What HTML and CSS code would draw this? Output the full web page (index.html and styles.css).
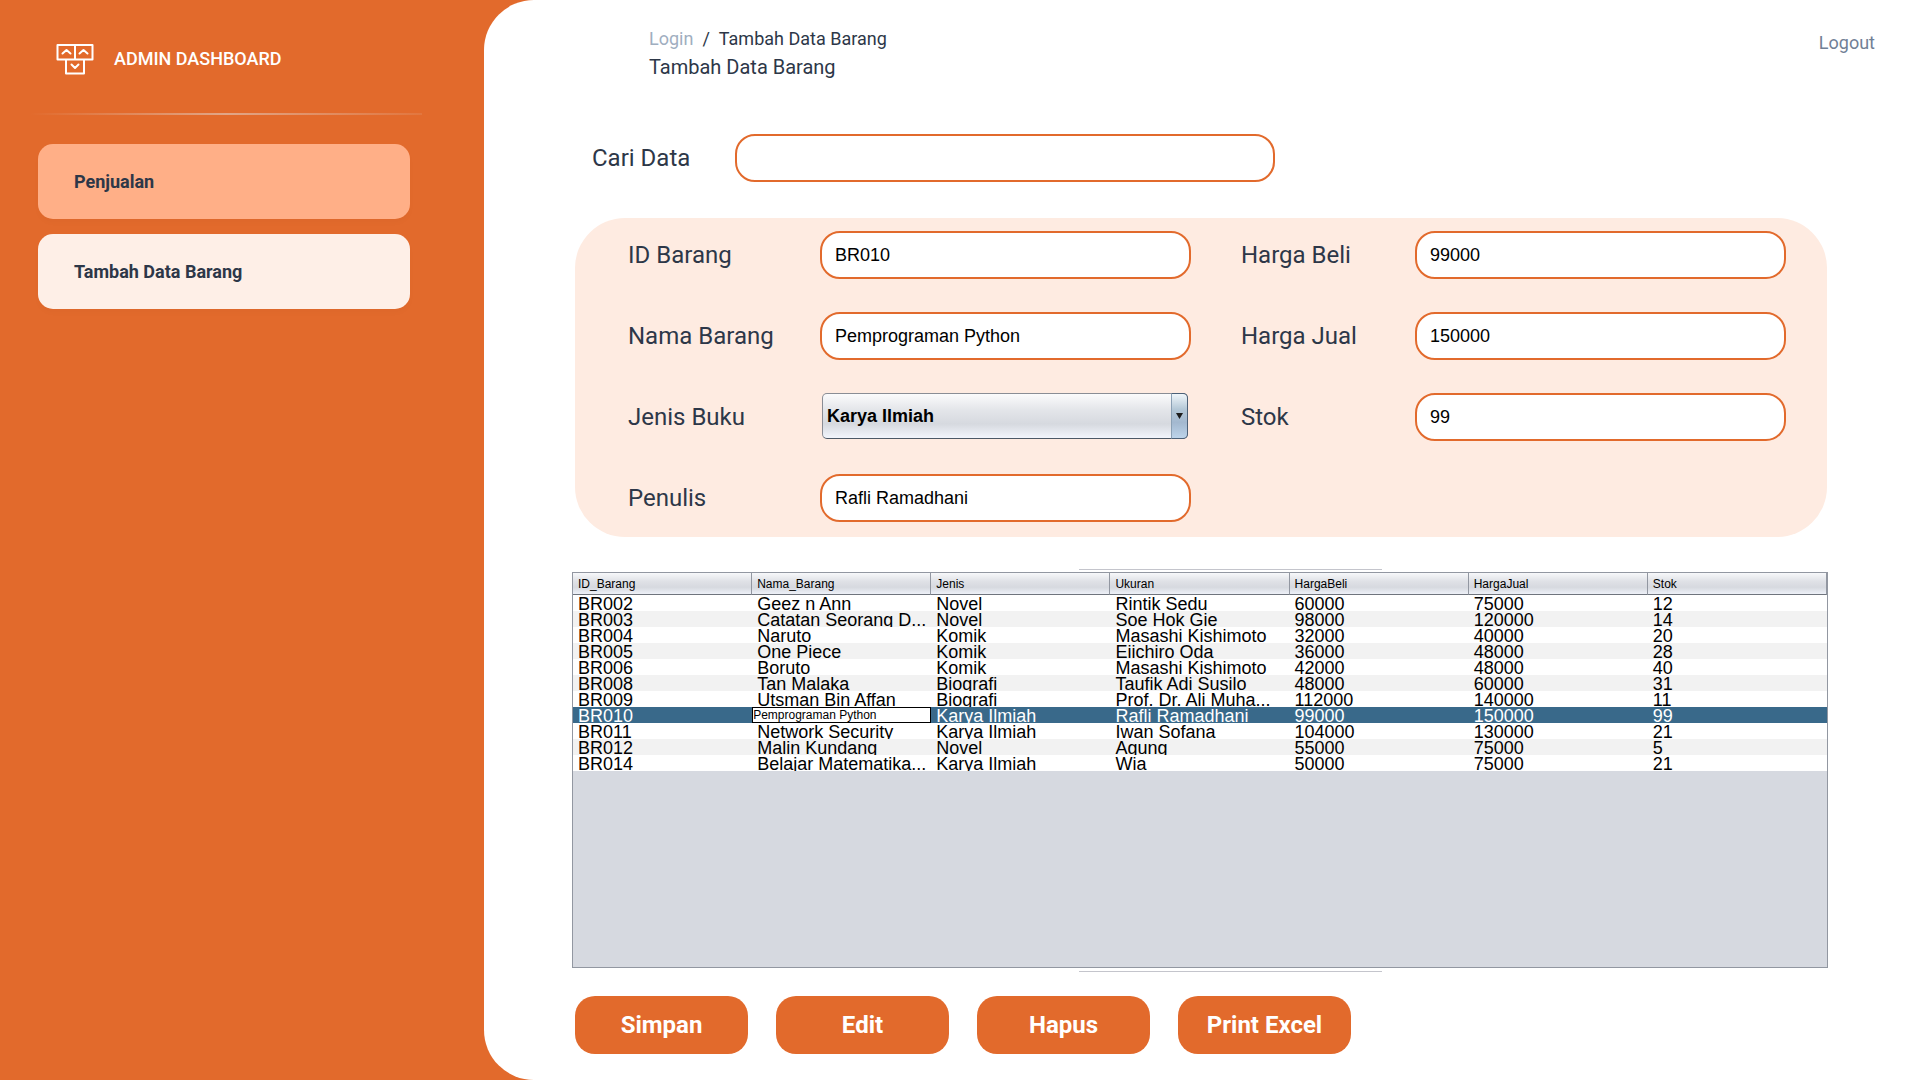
FILE: index.html
```html
<!DOCTYPE html>
<html lang="id">
<head>
<meta charset="utf-8">
<title>Tambah Data Barang</title>
<link rel="stylesheet" href="styles.css">
</head>
<body>
<div class="app">
  <aside class="sidebar">
    <div class="brand">
      <svg class="brand-icon" width="38" height="31" viewBox="0 0 38 31" fill="none" stroke="#fff" stroke-width="2" stroke-linejoin="round" stroke-linecap="round" aria-hidden="true">
        <path d="M1.500 1H36.500V15.500H1.500ZM19 1V15.500M10 15.500H28V29.500H10Z"/>
        <path d="M6.500 9.500L10.500 6L14.500 9.500M23.500 9.500L27.500 6L31.500 9.500M15.500 20.500L19 24L22.500 20.500"/>
      </svg>
      <span class="brand-name">ADMIN DASHBOARD</span>
    </div>
    <div class="divider"></div>
    <nav class="menu">
      <a class="menu-item" href="#penjualan">Penjualan</a>
      <a class="menu-item active" href="#barang">Tambah Data Barang</a>
    </nav>
  </aside>
  <main class="main">
    <header class="topbar">
      <div class="heading">
        <nav class="crumbs"><a href="#login">Login</a><span>/</span><span>Tambah Data Barang</span></nav>
        <h1 class="title">Tambah Data Barang</h1>
      </div>
      <a class="logout" href="#logout">Logout</a>
    </header>
    <div class="content">
      <div class="search">
        <label class="label" for="cari">Cari Data</label>
        <input class="field search-field" id="cari" type="text">
      </div>
      <form class="panel" id="barang-form">
        <label class="label" for="id">ID Barang</label>
        <input class="field" id="id" type="text" value="BR010">
        <label class="label right" for="beli">Harga Beli</label>
        <input class="field" id="beli" type="text" value="99000">
        <label class="label" for="nama">Nama Barang</label>
        <input class="field" id="nama" type="text" value="Pemprograman Python">
        <label class="label right" for="jual">Harga Jual</label>
        <input class="field" id="jual" type="text" value="150000">
        <label class="label" for="jenis">Jenis Buku</label>
        <div class="combo">
          <select id="jenis">
            <option>Karya Ilmiah</option>
            <option>Novel</option>
            <option>Komik</option>
            <option>Biografi</option>
          </select>
          <span class="combo-arrow"></span>
        </div>
        <label class="label right" for="stok">Stok</label>
        <input class="field" id="stok" type="text" value="99">
        <label class="label" for="penulis">Penulis</label>
        <input class="field" id="penulis" type="text" value="Rafli Ramadhani">
      </form>
      <div class="rule"></div>
      <div class="grid-box">
        <table class="grid">
          <thead>
            <tr><th>ID_Barang</th><th>Nama_Barang</th><th>Jenis</th><th>Ukuran</th><th>HargaBeli</th><th>HargaJual</th><th>Stok</th></tr>
          </thead>
          <tbody>
            <tr><td>BR002</td><td>Geez n Ann</td><td>Novel</td><td>Rintik Sedu</td><td>60000</td><td>75000</td><td>12</td></tr>
            <tr><td>BR003</td><td>Catatan Seorang D...</td><td>Novel</td><td>Soe Hok Gie</td><td>98000</td><td>120000</td><td>14</td></tr>
            <tr><td>BR004</td><td>Naruto</td><td>Komik</td><td>Masashi Kishimoto</td><td>32000</td><td>40000</td><td>20</td></tr>
            <tr><td>BR005</td><td>One Piece</td><td>Komik</td><td>Eiichiro Oda</td><td>36000</td><td>48000</td><td>28</td></tr>
            <tr><td>BR006</td><td>Boruto</td><td>Komik</td><td>Masashi Kishimoto</td><td>42000</td><td>48000</td><td>40</td></tr>
            <tr><td>BR008</td><td>Tan Malaka</td><td>Biografi</td><td>Taufik Adi Susilo</td><td>48000</td><td>60000</td><td>31</td></tr>
            <tr><td>BR009</td><td>Utsman Bin Affan</td><td>Biografi</td><td>Prof. Dr. Ali Muha...</td><td>112000</td><td>140000</td><td>11</td></tr>
            <tr class="selected"><td>BR010</td><td class="editing"><input type="text" aria-label="Nama_Barang" value="Pemprograman Python"></td><td>Karya Ilmiah</td><td>Rafli Ramadhani</td><td>99000</td><td>150000</td><td>99</td></tr>
            <tr><td>BR011</td><td>Network Security</td><td>Karya Ilmiah</td><td>Iwan Sofana</td><td>104000</td><td>130000</td><td>21</td></tr>
            <tr><td>BR012</td><td>Malin Kundang</td><td>Novel</td><td>Agung</td><td>55000</td><td>75000</td><td>5</td></tr>
            <tr><td>BR014</td><td>Belajar Matematika...</td><td>Karya Ilmiah</td><td>Wia</td><td>50000</td><td>75000</td><td>21</td></tr>
          </tbody>
        </table>
      </div>
      <div class="rule"></div>
      <div class="actions">
        <button type="submit" form="barang-form">Simpan</button>
        <button type="button">Edit</button>
        <button type="button">Hapus</button>
        <button type="button">Print Excel</button>
      </div>
    </div>
  </main>
</div>
</body>
</html>
```

FILE: styles.css
```css
* { box-sizing: border-box; }

body {
  margin: 0;
  background: #e26a2c;
  color: #2d3748;
  font-family: Roboto, sans-serif;
}

a { color: inherit; text-decoration: none; }

.app { display: flex; min-height: 100vh; }

/* Sidebar */
.sidebar { flex: 0 0 484px; padding: 42px 62px 0 30px; }

.brand { display: flex; align-items: center; gap: 20px; height: 34px; padding-left: 26px; }

.brand-name { color: #fff; font-size: 18px; line-height: 26px; font-weight: 500; }

.divider {
  height: 2px;
  margin-top: 37px;
  background: linear-gradient(90deg, rgba(224, 225, 226, 0), rgba(224, 225, 226, .5) 50%, rgba(224, 225, 226, .1));
}

.menu { display: flex; flex-direction: column; gap: 15px; margin: 29px 12px 0 8px; }

.menu-item {
  display: flex;
  align-items: center;
  height: 75px;
  padding: 0 36px;
  border-radius: 15px;
  background: #ffaf87;
  box-shadow: 0 4px 6px rgba(0, 0, 0, .02);
  font-size: 18px;
  font-weight: 700;
}

.menu-item.active { background: #feefe7; }

/* Main area */
.main {
  flex: 1;
  min-width: 0;
  display: flex;
  flex-direction: column;
  background: #fff;
  border-radius: 50px 0 0 50px;
}

.topbar { display: flex; justify-content: space-between; padding: 25px 45px 0 165px; line-height: 28px; }

.crumbs { display: flex; gap: 9px; font-size: 18px; }
.crumbs a { color: #a0aec0; }

.title { margin: 0; font-size: 20px; font-weight: 400; }

.logout { color: #718096; font-size: 18px; padding-top: 4px; }

.content { flex: 1; display: flex; flex-direction: column; padding: 53px 92px 26px 88px; }

.label { font-size: 24px; line-height: 28px; }

.field {
  width: 100%;
  min-width: 0;
  height: 48px;
  padding: 0 13px;
  border: 2px solid #e26a2c;
  border-radius: 20px;
  background: #fff;
  color: #000;
  font: 18px/24px "Liberation Sans", Arial, sans-serif;
}

.search { display: flex; align-items: center; padding-left: 20px; }
.search .label { flex: 0 0 143px; }
.search-field { flex: 0 1 540px; }

.panel {
  display: grid;
  grid-template-columns: 192px 1fr 224px 1fr;
  row-gap: 33px;
  align-items: center;
  margin: 36px 1px 32px 3px;
  padding: 13px 41px 15px 53px;
  border-radius: 50px;
  background: #feebe1;
}

.label.right { padding-left: 50px; }

.combo {
  position: relative;
  align-self: start;
  height: 46px;
  margin: 0 3px 0 2px;
}

.combo select {
  appearance: none;
  width: 100%;
  height: 100%;
  padding: 0 24px 0 4px;
  border: 1px solid #8a8d95;
  border-bottom-color: #4c5866;
  border-radius: 5px;
  background: linear-gradient(#fbfbfc, #e4e6ea 35%, #d6d9df 68%, #f2f5fc);
  color: #000;
  font: 700 18px/24px "Liberation Sans", Arial, sans-serif;
}

.combo-arrow {
  position: absolute;
  inset: 0 0 0 auto;
  width: 17px;
  border: 1px solid #4c6077;
  border-left-color: #8ba0b4;
  border-radius: 0 5px 5px 0;
  background: linear-gradient(#f0f6fa, #b3c7d6 35%, #a3b8cf 65%, #bdd4ea);
  pointer-events: none;
}

.combo-arrow::after {
  content: "";
  display: block;
  width: 7px;
  height: 6px;
  margin: 19px auto 0;
  background: #1c1c1c;
  clip-path: polygon(0 0, 100% 0, 50% 100%);
}

/* Data grid */
.rule { width: 303px; height: 1px; margin-left: 507px; background: #c4c5cc; }

.grid-box {
  flex: 1;
  margin: 2px 0 3px;
  border: 1px solid #9297a1;
  background: #d6d9e0;
}

.grid {
  width: 100%;
  table-layout: fixed;
  border-collapse: separate;
  border-spacing: 0;
  font-family: "Liberation Sans", Arial, sans-serif;
  color: #000;
}

.grid th {
  height: 22px;
  padding: 0 5px;
  border-right: 1px solid #9297a1;
  border-bottom: 1px solid #6f747d;
  background: linear-gradient(#f7f8fa, #dfe1e6 40%, #d6d9df 68%, #eef1f8);
  font-size: 12px;
  line-height: 16px;
  font-weight: 400;
  text-align: left;
}

/* Rows are shorter than the text, so descenders are clipped at the row edge */
.grid td {
  height: 16px;
  padding: 2px 0 0 5px;
  overflow: hidden;
  white-space: nowrap;
  background: #fff;
  font-size: 18px;
  line-height: 14px;
}

.grid tbody tr:nth-child(even) td { background: #f2f2f2; }

.grid tbody tr.selected td { background: #39698a; color: #fff; }

.grid .selected td.editing { padding: 0; }

.editing input {
  display: block;
  width: 100%;
  height: 16px;
  padding: 0;
  border: 1px solid #000;
  background: #fff;
  font: 12px/14px "Liberation Sans", Arial, sans-serif;
}

.actions { display: flex; gap: 28px; margin: 24px 0 0 3px; }

.actions button {
  width: 173px;
  height: 58px;
  padding: 0;
  border: 0;
  border-radius: 20px;
  background: #e26a2c;
  color: #fff;
  font: 700 24px/28px Roboto, sans-serif;
}
```
